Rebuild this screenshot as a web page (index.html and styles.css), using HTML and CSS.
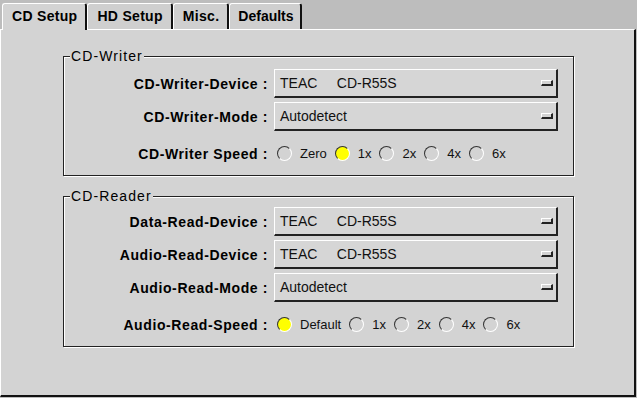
FILE: index.html
```html
<!DOCTYPE html>
<html lang="en">
<head>
  <meta charset="UTF-8">
  <title>CD Setup</title>
  <link rel="stylesheet" href="styles.css">
</head>
<body>
  <div class="window">
    <div class="tabs">
      <div class="tab active">CD Setup</div>
      <div class="tab">HD Setup</div>
      <div class="tab">Misc.</div>
      <div class="tab">Defaults</div>
    </div>
    <div class="panel">
      <fieldset class="group writer">
        <legend>CD-Writer</legend>
        <div class="row">
          <span class="label">CD-Writer-Device :</span>
          <div class="combo"><span class="value">TEAC     CD-R55S</span><span class="knob"></span></div>
        </div>
        <div class="row">
          <span class="label">CD-Writer-Mode :</span>
          <div class="combo"><span class="value">Autodetect</span><span class="knob"></span></div>
        </div>
        <div class="row radio-row">
          <span class="label">CD-Writer Speed :</span>
          <div class="radios">
            <label class="radio"><span class="dot"></span>Zero</label>
            <label class="radio"><span class="dot on"></span>1x</label>
            <label class="radio"><span class="dot"></span>2x</label>
            <label class="radio"><span class="dot"></span>4x</label>
            <label class="radio"><span class="dot"></span>6x</label>
          </div>
        </div>
      </fieldset>

      <fieldset class="group reader">
        <legend>CD-Reader</legend>
        <div class="row">
          <span class="label">Data-Read-Device :</span>
          <div class="combo"><span class="value">TEAC     CD-R55S</span><span class="knob"></span></div>
        </div>
        <div class="row">
          <span class="label">Audio-Read-Device :</span>
          <div class="combo"><span class="value">TEAC     CD-R55S</span><span class="knob"></span></div>
        </div>
        <div class="row">
          <span class="label">Audio-Read-Mode :</span>
          <div class="combo"><span class="value">Autodetect</span><span class="knob"></span></div>
        </div>
        <div class="row radio-row">
          <span class="label">Audio-Read-Speed :</span>
          <div class="radios">
            <label class="radio"><span class="dot on"></span>Default</label>
            <label class="radio"><span class="dot"></span>1x</label>
            <label class="radio"><span class="dot"></span>2x</label>
            <label class="radio"><span class="dot"></span>4x</label>
            <label class="radio"><span class="dot"></span>6x</label>
          </div>
        </div>
      </fieldset>
    </div>
  </div>
</body>
</html>
```

FILE: styles.css
```css
* {
  box-sizing: border-box;
}

body {
  margin: 0;
  width: 637px;
  height: 398px;
  background-color: #bdbdbd;
  font-family: 'Liberation Sans', Arial, sans-serif;
  font-size: 14px;
  color: #000;
  overflow: hidden;
}

.window {
  display: flex;
  flex-direction: column;
  height: 100%;
}

.tabs {
  display: flex;
  height: 29px;
  padding: 3px 0 0 2px;
}

.tab {
  background-color: #cfcfcf;
  border-top: 1px solid #fff;
  border-left: 1px solid #fff;
  border-right: 2px solid #111;
  border-radius: 3px 3px 0 0;
  padding: 0 8px 0 9px;
  font-weight: bold;
  letter-spacing: 0.3px;
  line-height: 24px;
  white-space: nowrap;
}

.tab:last-child {
  letter-spacing: 0;
  padding: 0 6px 0 8px;
}

.tab.active {
  background-color: #d3d3d3;
  height: 27px;
  margin-bottom: -1px;
  position: relative;
  z-index: 1;
}

.panel {
  flex: 1;
  background-color: #d3d3d3;
  border-top: 1px solid #fff;
  border-left: 1px solid #fff;
  border-right: 2px solid #111;
  border-bottom: 2px solid #111;
  margin: 0 1px 1px 0;
}

.group {
  margin: 18px 0 0 62px;
  width: 511px;
  padding: 5px 15px 7px 0;
  border: 1px solid #222;
  box-shadow: 1px 1px 0 #fff, inset 1px 1px 0 #fff;
  min-width: 0;
}

.group.reader {
  margin-top: 12px;
  padding-top: 3px;
}

.group legend {
  margin-left: 6px;
  padding: 0 1px 0 1px;
  line-height: 16px;
  letter-spacing: 1.1px;
  background-color: #d3d3d3;
}

.row {
  display: grid;
  grid-template-columns: 204px 1fr;
  column-gap: 6px;
  align-items: center;
  height: 29px;
  margin-bottom: 4px;
}

.row:last-child {
  margin-bottom: 0;
}

.radio-row {
  margin-top: 8px;
}

.label {
  text-align: right;
  font-weight: bold;
  letter-spacing: 0.6px;
  white-space: nowrap;
}

.combo {
  display: flex;
  align-items: center;
  justify-content: space-between;
  height: 29px;
  padding: 0 3px 0 5px;
  background-color: #d6d6d6;
  border-top: 1px solid #fff;
  border-left: 1px solid #fff;
  border-right: 2px solid #222;
  border-bottom: 2px solid #222;
}

.value {
  white-space: pre;
  color: #111;
}

.knob {
  width: 12px;
  height: 6px;
  background-color: #d3d3d3;
  border-top: 1px solid #fff;
  border-left: 1px solid #fff;
  border-right: 2px solid #222;
  border-bottom: 2px solid #222;
}

.radios {
  display: flex;
  align-items: center;
  gap: 8px;
  padding-left: 3px;
}

.radio {
  display: flex;
  align-items: center;
  gap: 8px;
  font-size: 13px;
  color: #111;
}

.dot {
  width: 15px;
  height: 15px;
  border-radius: 50%;
  border: 1.5px solid;
  border-color: #333 #fff #fff #333;
  background-color: #d3d3d3;
}

.dot.on {
  background-color: #ffff00;
}
```
